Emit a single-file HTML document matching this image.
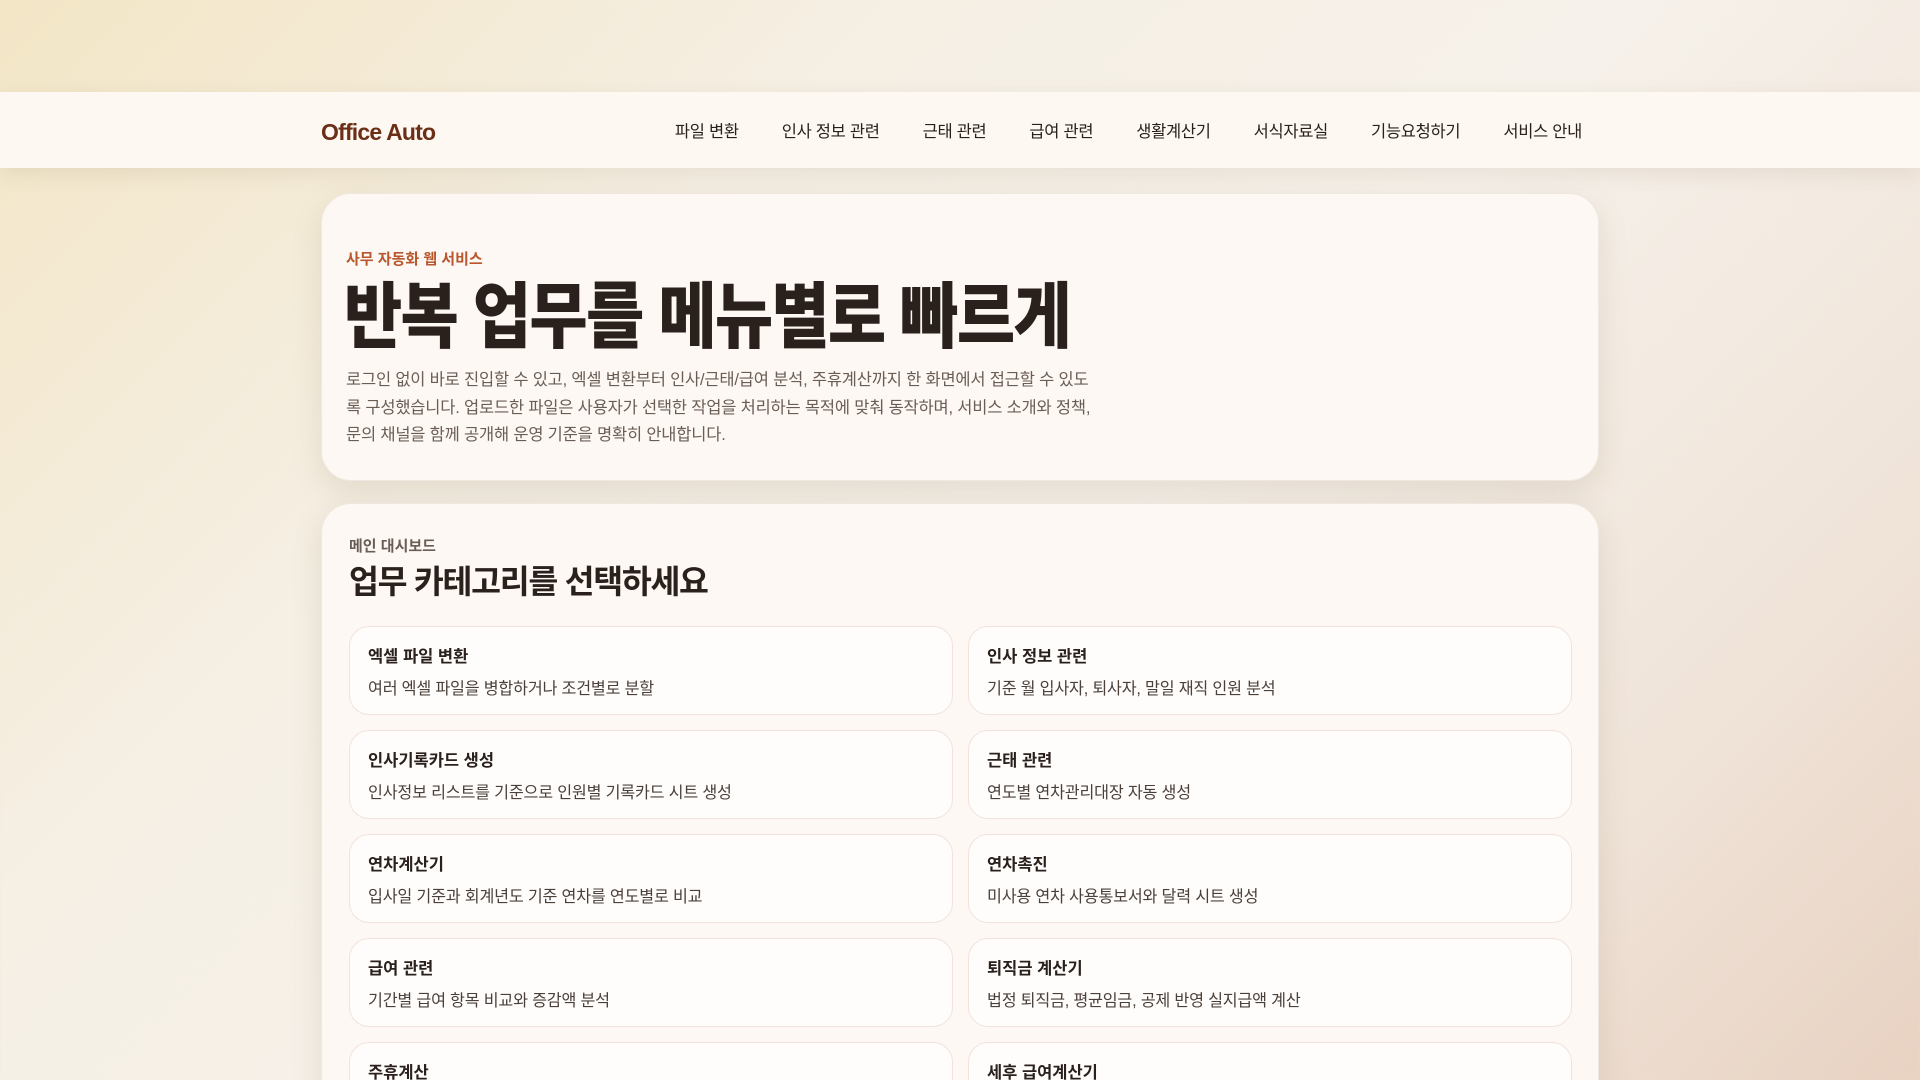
<!DOCTYPE html>
<html lang="ko"><head><meta charset="utf-8">
<style>
*{margin:0;padding:0;box-sizing:border-box}
html,body{width:1920px;height:1080px;overflow:hidden}
body{font-family:"Liberation Sans","Noto Sans CJK KR",sans-serif;color:#2a211d;
background:linear-gradient(135deg,#f3e6c6 0%,#f5efe4 30%,#f6f1ea 55%,#f0e4d9 80%,#e8d2c2 100%);position:relative}
.nav{position:absolute;top:92px;left:0;width:1920px;height:76px;background:#fdf8f2;box-shadow:0 6px 20px rgba(120,100,70,.12)}
.logo{position:absolute;left:321px;top:2px;line-height:76px;font-size:23px;font-weight:700;color:#6b2e16;letter-spacing:-0.8px}
.menu{position:absolute;right:338px;top:2px;line-height:76px;font-size:16.5px;color:#2a211d;display:flex;gap:43px;letter-spacing:-0.3px}
.card{position:absolute;left:321px;width:1278px;background:#fdf8f3;border-radius:30px;box-shadow:0 10px 30px rgba(120,100,70,.15);border:1px solid #f0e8e0}
.hero{top:193px;height:288px}
.eye{position:absolute;left:24px;top:54px;font-size:15px;font-weight:700;color:#b8572e}
h1{position:absolute;left:22px;top:79px;font-size:72px;font-weight:900;letter-spacing:-2px;color:#2a211d;line-height:90px;transform:scaleX(.88);transform-origin:left;white-space:nowrap}
.desc{position:absolute;left:24px;top:173px;font-size:16.5px;letter-spacing:-0.2px;line-height:27.5px;color:#6a5d55;white-space:nowrap}
.dash{top:503px;height:640px}
.sub{position:absolute;left:27px;top:31px;font-size:15px;font-weight:700;color:#6a5d55}
h2{position:absolute;left:27px;top:52px;font-size:32.5px;font-weight:700;letter-spacing:-1.3px;color:#2a211d}
.grid{position:absolute;left:27px;top:122px;width:1223px;display:grid;grid-template-columns:604px 604px;column-gap:15px;row-gap:15px}
.it{height:89px;background:#fffdfb;border:1px solid #f3e2dc;border-radius:20px;padding:19px 18px}
.it b{display:block;font-size:16.5px;font-weight:700;color:#2a211d;line-height:22px}
.it span{display:block;margin-top:10px;font-size:16.2px;letter-spacing:-0.2px;color:#4a3f39;line-height:22px}
</style></head><body>
<div class="nav"><div class="logo">Office Auto</div>
<div class="menu"><span>파일 변환</span><span>인사 정보 관련</span><span>근태 관련</span><span>급여 관련</span><span>생활계산기</span><span>서식자료실</span><span>기능요청하기</span><span>서비스 안내</span></div></div>
<div class="card hero">
<div class="eye">사무 자동화 웹 서비스</div>
<h1>반복 업무를 메뉴별로 빠르게</h1>
<div class="desc">로그인 없이 바로 진입할 수 있고, 엑셀 변환부터 인사/근태/급여 분석, 주휴계산까지 한 화면에서 접근할 수 있도<br>록 구성했습니다. 업로드한 파일은 사용자가 선택한 작업을 처리하는 목적에 맞춰 동작하며, 서비스 소개와 정책,<br>문의 채널을 함께 공개해 운영 기준을 명확히 안내합니다.</div>
</div>
<div class="card dash">
<div class="sub">메인 대시보드</div>
<h2>업무 카테고리를 선택하세요</h2>
<div class="grid">
<div class="it"><b>엑셀 파일 변환</b><span>여러 엑셀 파일을 병합하거나 조건별로 분할</span></div>
<div class="it"><b>인사 정보 관련</b><span>기준 월 입사자, 퇴사자, 말일 재직 인원 분석</span></div>
<div class="it"><b>인사기록카드 생성</b><span>인사정보 리스트를 기준으로 인원별 기록카드 시트 생성</span></div>
<div class="it"><b>근태 관련</b><span>연도별 연차관리대장 자동 생성</span></div>
<div class="it"><b>연차계산기</b><span>입사일 기준과 회계년도 기준 연차를 연도별로 비교</span></div>
<div class="it"><b>연차촉진</b><span>미사용 연차 사용통보서와 달력 시트 생성</span></div>
<div class="it"><b>급여 관련</b><span>기간별 급여 항목 비교와 증감액 분석</span></div>
<div class="it"><b>퇴직금 계산기</b><span>법정 퇴직금, 평균임금, 공제 반영 실지급액 계산</span></div>
<div class="it"><b>주휴계산</b><span>주휴수당 계산</span></div>
<div class="it"><b>세후 급여계산기</b><span>세후 급여 계산</span></div>
</div>
</div>
</body></html>
